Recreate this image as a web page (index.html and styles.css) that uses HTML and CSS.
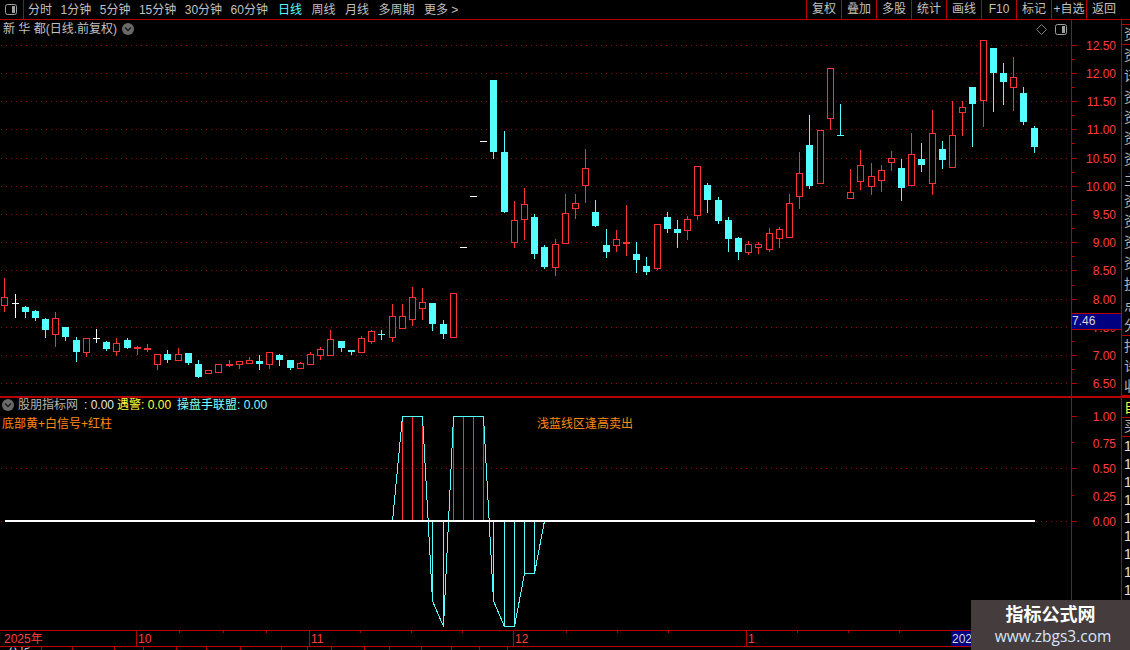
FILE: index.html
```html
<!DOCTYPE html>
<html lang="zh-CN">
<head>
<meta charset="utf-8">
<title>新华都 日线</title>
<link rel="stylesheet" href="styles.css">
</head>
<body>
<div class="app">
  <header class="toolbar">
    <div class="toggle-box">
      <svg class="win-icon" viewBox="0 0 12 11"><rect x=".5" y=".5" width="11" height="10" rx="2" class="win-frame"/><rect x="7" y="2" width="3" height="7" class="win-fill"/></svg>
    </div>
    <nav class="periods">
      <span>分时</span><span>1分钟</span><span>5分钟</span><span>15分钟</span><span>30分钟</span><span>60分钟</span>
    </nav>
    <nav class="periods wide">
      <span class="active">日线</span><span>周线</span><span>月线</span><span>多周期</span><span>更多 &gt;</span>
    </nav>
    <div class="tools">
      <span>复权</span><span>叠加</span><span>多股</span><span>统计</span><span>画线</span><span>F10</span><span>标记</span><span>+自选</span><span>返回</span>
    </div>
  </header>

  <div class="workspace">
    <div class="main">
      <div class="row price-row">
        <section class="panel">
          <svg class="canvas" viewBox="0 20 1071 376">
            <path class="grid" d="M1 45H1068M1 73H1068M1 101H1068M1 129H1068M1 158H1068M1 186H1068M1 214H1068M1 242H1068M1 270H1068M1 299H1068M1 327H1068M1 355H1068M1 383H1068"/>
            <path id="wick-red" class="stroke-red"/>
            <path id="wick-cyan" class="stroke-cyan"/>
            <path id="wick-white" class="stroke-white"/>
            <path id="body-red" class="body-red"/>
            <path id="fill-red" class="fill-red"/>
            <path id="body-cyan" class="fill-cyan"/>
          </svg>
          <div class="price-head">
            <span>新 华 都(日线.前复权)</span>
            <svg class="chev" viewBox="0 0 12 12"><circle cx="6" cy="6" r="6" class="chev-disc"/><path d="M3 4.5l3 3 3-3" class="chev-mark"/></svg>
          </div>
          <div class="corner-icons">
            <svg class="diamond" viewBox="0 0 11 11"><path d="M5.5.5l5 5-5 5-5-5z" class="diamond-line"/></svg>
            <svg class="win-icon" viewBox="0 0 12 11"><rect x=".5" y=".5" width="11" height="10" rx="2" class="win-frame"/><rect x="7" y="2" width="3" height="7" class="win-fill"/></svg>
          </div>
        </section>
        <aside class="axis">
          <svg class="canvas" viewBox="1072 20 49 376">
            <path class="tick" d="M1072 45h5M1072 73h5M1072 101h5M1072 129h5M1072 158h5M1072 186h5M1072 214h5M1072 242h5M1072 270h5M1072 299h5M1072 327h5M1072 355h5M1072 383h5M1072 59h3M1072 87h3M1072 115h3M1072 143h3M1072 172h3M1072 200h3M1072 228h3M1072 256h3M1072 285h3M1072 313h3M1072 341h3M1072 369h3"/>
            <g class="axis-labels">
              <text x="1116" y="50">12.50</text><text x="1116" y="78">12.00</text><text x="1116" y="106">11.50</text><text x="1116" y="134">11.00</text><text x="1116" y="163">10.50</text><text x="1116" y="191">10.00</text><text x="1116" y="219">9.50</text><text x="1116" y="247">9.00</text><text x="1116" y="275">8.50</text><text x="1116" y="304">8.00</text><text x="1116" y="332">7.50</text><text x="1116" y="360">7.00</text><text x="1116" y="388">6.50</text>
            </g>
          </svg>
          <div class="price-tag">7.46</div>
        </aside>
      </div>

      <div class="row indicator-row">
        <section class="panel">
          <svg class="canvas" viewBox="0 398 1071 232">
            <path class="grid" d="M1 468.5H1068M1 521.5H1068"/>
            <path class="line-red" d="M402.5 417V521M412.5 417V521M422.5 417V521M453.5 417V521M463.5 417V521M473.5 417V521M483.5 417V521"/>
            <path class="line-cyan" d="M432.5 521V601M443.5 521V626M493.5 521V601M504.5 521V626M514.5 521V626M524.5 521V573M534.5 521V573"/>
            <polyline class="line-cyan" points="392.5,521 402.5,416.5 422.5,416.5 432.5,601 443.5,626.5 453.5,416.5 483.5,416.5 493.5,601 504.5,626.5 514.5,626.5 524.5,573.5 534.5,573.5 544.5,521"/>
            <rect class="zero-line" x="5" y="520" width="1030" height="2"/>
          </svg>
          <div class="ind-head">
            <svg class="chev" viewBox="0 0 12 12"><circle cx="6" cy="6" r="6" class="chev-disc"/><path d="M3 4.5l3 3 3-3" class="chev-mark"/></svg>
            <span class="c-grey">股朋指标网</span>
            <span class="c-white">: 0.00</span>
            <span class="c-yellow">遇警: 0.00</span>
            <span class="c-cyan">操盘手联盟: 0.00</span>
          </div>
          <div class="ind-note">底部黄+白信号+红柱</div>
          <div class="annotation">浅蓝线区逢高卖出</div>
        </section>
        <aside class="axis">
          <svg class="canvas" viewBox="1072 398 49 232">
            <path class="tick" d="M1072 416.5h5M1072 468.5h5M1072 521.5h5M1072 442.5h2M1072 495.5h2"/>
            <g class="axis-labels">
              <text x="1116" y="421">1.00</text><text x="1116" y="448">0.75</text><text x="1116" y="473">0.50</text><text x="1116" y="501">0.25</text><text x="1116" y="526">0.00</text>
            </g>
          </svg>
        </aside>
      </div>

      <div class="time-axis">
        <svg class="canvas" viewBox="0 631 1121 15">
          <rect class="year-mark" x="951" y="631" width="24" height="15"/>
          <path class="tick" d="M136.5 631V646M309.5 631V646M513.5 631V646M746.5 631V646M179.5 631v2M223.5 631v2M266.5 631v2M360.5 631v2M411.5 631v2M462.5 631v2M566.5 631v2M617.5 631v2M668.5 631v2M797.5 631v2M848.5 631v2M899.5 631v2"/>
          <g class="time-labels">
            <text x="4" y="643">2025年</text><text x="138" y="643">10</text><text x="311" y="643">11</text><text x="515" y="643">12</text><text x="748" y="643">1</text>
          </g>
          <text class="year-text" x="952" y="643">2026年</text>
        </svg>
      </div>
      <div class="status-row">
        <span class="status-cell w42"><span class="status-text">分析图</span></span><span class="status-cell w31"><span class="status-text">↑</span></span><span class="status-cell w42"></span><span class="status-cell w29"></span><span class="status-cell w33"></span><span class="status-cell w30"></span><span class="status-cell w34"></span><span class="status-cell w41"></span><span class="status-cell w26"></span><span class="status-cell w24"></span><span class="status-cell w33"></span><span class="status-cell w25"></span><span class="status-cell w32"></span><span class="status-cell w30"></span><span class="status-cell w28"></span><span class="status-cell w28"></span>
      </div>
    </div>

    <aside class="strip">
      <div class="strip-group g-top"></div>
      <div class="strip-group g-one">资</div>
      <div class="strip-group g-list">资<br>讯<br>资<br>资<br>资<br>资<br>主<br>资<br>资<br>资<br>资<br>投<br>点<br>分</div>
      <div class="strip-group g-tail">扣<br>许<br>收</div>
      <div class="strip-group g-self c-yellow">自</div>
      <div class="strip-group g-buy">买</div>
      <div class="strip-nums"><span>1</span><span>1</span><span>1</span><span>1</span><span>1</span><span>1</span><span>1</span><span>1</span><span>1</span></div>
    </aside>
  </div>

  <aside class="watermark">
    <strong>指标公式网</strong>
    <span>www.zbgs3.com</span>
  </aside>
</div>
<script src="candles.js"></script>
</body>
</html>
```

FILE: styles.css
```css
* { box-sizing: border-box; }

html, body {
  margin: 0;
  height: 100%;
  background: #000;
  overflow: hidden;
}

.app {
  position: relative;
  width: 1130px;
  height: 650px;
  overflow: hidden;
  background: #000;
  color: #c0c0c0;
  font: 12px/14px "Liberation Sans", "Noto Sans CJK SC", sans-serif;
}

/* toolbar */
.toolbar {
  display: flex;
  align-items: center;
  height: 20px;
  border-bottom: 1px solid #b80000;
}

.toggle-box {
  display: flex;
  align-items: center;
  justify-content: center;
  width: 24px;
  height: 19px;
  padding-right: 1px;
  border-right: 1px solid #b80000;
}

.win-icon { width: 12px; height: 11px; }
.win-frame { fill: none; stroke: #a0a0a0; }
.win-fill { fill: #a0a0a0; }

.periods {
  display: flex;
  gap: 8.5px;
  margin-left: 4px;
}

.periods.wide {
  gap: 9.5px;
  margin-left: 10px;
}

.active { color: #54ffff; }

.tools {
  display: flex;
  margin-left: auto;
  margin-right: 9px;
  height: 19px;
}

.tools span {
  width: 35px;
  line-height: 19px;
  text-align: center;
  border-left: 1px solid #b80000;
}

/* main layout */
.workspace {
  display: flex;
  height: 630px;
}

.main {
  width: 1121px;
  flex: none;
}

.row { display: flex; }
.price-row { height: 376px; }
.indicator-row {
  height: 234px;
  border-top: 2px solid #b80000;
}

.panel {
  position: relative;
  width: 1071px;
  flex: none;
}

.axis {
  position: relative;
  width: 50px;
  border-left: 1px solid #b80000;
}

.canvas {
  position: absolute;
  inset: 0;
  width: 100%;
  height: 100%;
  display: block;
}

.price-head {
  position: relative;
  display: flex;
  align-items: center;
  gap: 5px;
  padding: 2px 0 0 3px;
}

.chev { width: 12px; height: 12px; flex: none; }
.chev-disc { fill: #6a6a6a; }
.chev-mark { fill: none; stroke: #1c1c1c; stroke-width: 1.4; }

.corner-icons {
  position: absolute;
  top: 4px;
  right: 4px;
  display: flex;
  align-items: center;
  gap: 8px;
}

.diamond { width: 11px; height: 11px; }
.diamond-line { fill: none; stroke: #808080; }

/* chart strokes */
.grid { fill: none; stroke: #8c0f0f; stroke-dasharray: 1 4; shape-rendering: crispEdges; }
.stroke-red { fill: none; stroke: #ff3232; shape-rendering: crispEdges; }
.stroke-cyan { fill: none; stroke: #54ffff; shape-rendering: crispEdges; }
.stroke-white { fill: none; stroke: #fff; shape-rendering: crispEdges; }
.body-red { fill: #000; stroke: #ff3232; shape-rendering: crispEdges; }
.fill-red { fill: #ff3232; shape-rendering: crispEdges; }
.fill-cyan { fill: #54ffff; shape-rendering: crispEdges; }
.line-red { fill: none; stroke: #ff3232; shape-rendering: crispEdges; }
.line-cyan { fill: none; stroke: #54ffff; shape-rendering: crispEdges; }
.zero-line { fill: #fff; }
.tick { fill: none; stroke: #b80000; shape-rendering: crispEdges; }

.axis-labels text {
  fill: #ff3c3c;
  font-size: 12px;
  text-anchor: end;
}

.price-tag {
  position: absolute;
  left: 0;
  right: 0;
  top: 293px;
  height: 17px;
  background: #000080;
  border-top: 1px solid #b80000;
  border-bottom: 1px solid #b80000;
  color: #d8d8d8;
  line-height: 15px;
}

/* indicator */
.ind-head {
  position: relative;
  display: flex;
  align-items: center;
  height: 14px;
  padding-left: 2px;
}

.ind-head .c-grey { margin-left: 4px; }
.ind-head .c-white { margin-left: 6px; }
.ind-head .c-yellow { margin-left: 3px; }
.ind-head .c-cyan { margin-left: 6px; }

.c-grey { color: #b4b4b4; }
.c-white { color: #e6e6e6; }
.c-yellow { color: #ffff3c; }
.c-cyan { color: #7cffff; }

.ind-note {
  position: relative;
  margin-top: 5px;
  padding-left: 2px;
  color: #ff8a14;
}

.annotation {
  position: absolute;
  left: 537px;
  top: 19px;
  color: #ff8a14;
}

/* time axis */
.time-axis {
  position: relative;
  height: 17px;
  border-top: 1px solid #b80000;
  border-bottom: 1px solid #b80000;
}

.time-labels text { fill: #ff3c3c; font-size: 12px; }
.year-mark { fill: #000080; }
.year-text { fill: #d8d8d8; font-size: 12px; }

.status-row {
  display: flex;
  height: 3px;
  overflow: hidden;
}

.status-cell {
  flex: none;
  height: 3px;
  border-right: 1px solid #b80000;
  overflow: hidden;
}

.status-text { display: block; padding-left: 7px; color: #ddd; line-height: 14px; }
.w42 { width: 42px; }
.w31 { width: 31px; }
.w29 { width: 29px; }
.w33 { width: 33px; }
.w30 { width: 30px; }
.w34 { width: 34px; }
.w41 { width: 41px; }
.w26 { width: 26px; }
.w24 { width: 24px; }
.w25 { width: 25px; }
.w32 { width: 32px; }
.w28 { width: 28px; }

/* right strip */
.strip {
  width: 9px;
  height: 630px;
  flex: none;
  overflow: hidden;
  border-left: 1px solid #b80000;
  color: #b4b4b4;
  font-size: 14px;
  line-height: 20.8px;
}

.strip-group {
  width: 16px;
  overflow: hidden;
  border-bottom: 1px solid #b80000;
  padding-left: 2px;
}

.g-top { height: 5px; }
.g-one { height: 20px; line-height: 19px; }
.g-list { height: 291px; }
.g-tail { height: 60px; line-height: 20px; }
.g-self { height: 22px; line-height: 19px; border-top: 2px solid #b80000; }
.g-buy { height: 19px; line-height: 17px; }

.strip-nums {
  display: flex;
  flex-direction: column;
  padding-left: 2px;
  color: #e0e0e0;
  font-size: 14px;
  line-height: 18px;
}

/* watermark */
.watermark {
  position: absolute;
  left: 971px;
  top: 600px;
  width: 159px;
  height: 50px;
  display: flex;
  flex-direction: column;
  align-items: center;
  background: #453d3d;
  padding-top: 4px;
}

.watermark strong {
  color: #fff;
  font-size: 18px;
  line-height: 22px;
}

.watermark span {
  padding-left: 5px;
  color: #d4e4fa;
  font: 15.5px/21px "Open Sans", sans-serif;
}
```

FILE: candles.js
```js
// [kind, x, bodyTop, bodyBottom, wickTop, wickBottom]
// r = red hollow, c = cyan solid, w / a = white / cyan cross
var candles = [
  ['r',4,297,305,278,311],['w',15,303,303,294,317],['c',25,307,312,306,317],['c',35,311,318,310,320],
  ['c',45,319,330,318,337],['r',55,318,334,312,346],['c',65,327,337,327,340],['c',76,340,352,337,361],
  ['r',86,338,352,338,356],['w',96,338,338,329,342],['c',106,342,349,341,350],['r',116,343,351,338,355],
  ['c',127,340,348,338,348],['r',137,347,349,346,354],['r',147,348,350,344,351],['r',157,354,364,354,369],
  ['c',167,354,360,350,362],['r',178,354,360,348,360],['c',188,353,363,353,364],['c',198,364,377,360,377],
  ['r',208,370,373,370,373],['r',218,364,372,364,372],['r',229,364,366,360,366],['r',239,361,364,361,368],
  ['r',249,360,363,357,363],['c',259,361,364,355,369],['r',269,352,364,352,368],['c',279,355,360,354,365],
  ['c',290,360,368,360,369],['r',300,363,368,362,368],['r',310,354,364,352,364],['r',320,349,355,347,359],
  ['r',330,339,355,330,355],['c',341,341,348,341,351],['c',351,350,352,350,354],['r',361,338,352,336,352],
  ['r',371,331,341,330,343],['a',381,334,334,330,339],['r',392,316,337,304,341],['r',402,316,328,304,328],
  ['r',412,297,319,287,325],['r',422,302,308,288,319],['c',432,303,324,303,330],['c',443,324,334,320,338],
  ['r',453,293,337,293,337],['w',463,247,247,247,247],['w',473,196,196,196,196],['w',483,141,141,141,141],
  ['c',493,80,152,80,158],['c',504,152,212,131,212],['r',514,220,242,201,247],['r',524,204,219,188,239],
  ['c',534,217,254,214,258],['c',544,247,267,245,268],['r',555,244,267,239,275],['r',565,213,243,194,243],
  ['r',575,203,208,194,218],['r',585,168,185,149,202],['c',595,212,226,200,226],['c',606,245,252,229,257],
  ['r',616,239,245,230,251],['r',626,242,244,205,255],['c',636,254,260,242,272],['c',646,266,272,257,274],
  ['r',657,224,268,224,269],['c',667,217,229,212,232],['c',677,229,233,220,247],['r',687,219,230,216,239],
  ['r',697,166,215,166,219],['c',707,185,200,183,212],['c',718,200,221,197,223],['c',728,220,239,217,251],
  ['c',738,238,252,237,259],['r',748,244,252,241,254],['r',758,244,247,242,253],['r',769,233,249,228,251],
  ['r',779,229,238,227,247],['r',789,203,237,194,237],['r',799,173,196,152,208],['c',809,145,186,115,188],
  ['r',820,130,183,130,183],['r',830,68,118,68,129],['a',840,135,135,104,135],['r',850,192,198,169,198],
  ['r',860,165,181,150,189],['r',871,176,186,163,194],['r',881,170,180,165,191],['r',891,158,162,151,170],
  ['c',901,168,188,159,200],['r',911,154,185,133,185],['c',921,159,165,143,171],['r',932,133,183,110,194],
  ['c',942,149,160,141,168],['r',952,135,167,101,167],['r',962,107,112,101,135],['c',972,87,104,87,146],
  ['r',983,40,100,40,126],['c',993,48,73,48,111],['c',1003,73,82,63,104],['r',1013,77,87,57,110],
  ['c',1023,93,122,87,124],['c',1034,128,147,126,152]
];

var d = { wickRed: '', wickCyan: '', wickWhite: '', bodyRed: '', fillRed: '', bodyCyan: '' };

candles.forEach(function (c) {
  var kind = c[0], x = c[1], top = c[2], bottom = c[3], wt = c[4], wb = c[5];
  var wick = 'M' + (x + 0.5) + ' ' + wt + 'V' + (wb + 1);
  var bar = 'M' + (x - 3) + ' ' + (top + 0.5) + 'h7';
  if (kind === 'w') {
    d.wickWhite += (wt !== wb ? wick : '') + bar;
  } else if (kind === 'a') {
    d.wickCyan += wick + bar;
  } else if (kind === 'c') {
    d.wickCyan += wick;
    d.bodyCyan += 'M' + (x - 3) + ' ' + top + 'h7v' + (bottom - top) + 'h-7z';
  } else {
    d.wickRed += wick;
    if (bottom - top <= 2) {
      d.fillRed += 'M' + (x - 3) + ' ' + top + 'h7v2h-7z';
    } else {
      d.bodyRed += 'M' + (x - 2.5) + ' ' + (top + 0.5) + 'h6v' + (bottom - top) + 'h-6z';
    }
  }
});

document.getElementById('wick-red').setAttribute('d', d.wickRed);
document.getElementById('wick-cyan').setAttribute('d', d.wickCyan);
document.getElementById('wick-white').setAttribute('d', d.wickWhite);
document.getElementById('body-red').setAttribute('d', d.bodyRed);
document.getElementById('fill-red').setAttribute('d', d.fillRed);
document.getElementById('body-cyan').setAttribute('d', d.bodyCyan);
```
